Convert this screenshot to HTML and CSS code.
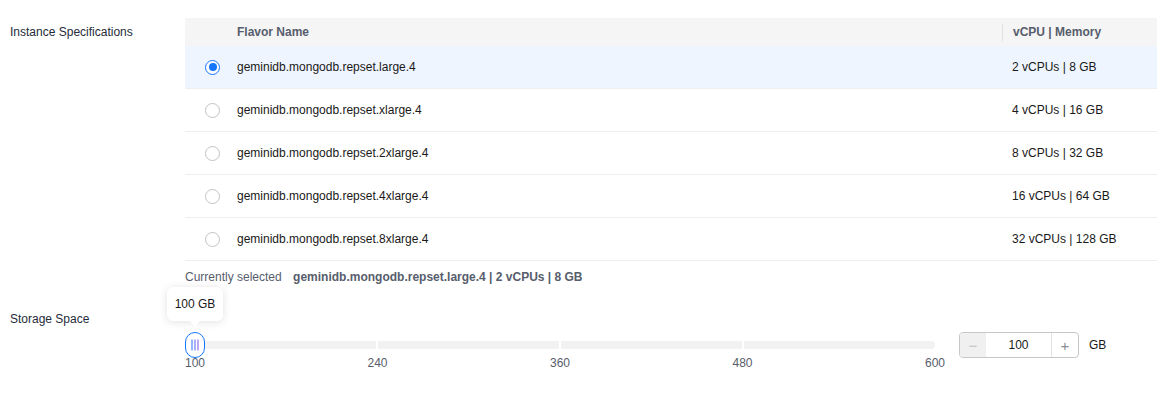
FILE: index.html
```html
<!DOCTYPE html>
<html lang="en">
  <head>
    <meta charset="UTF-8" />
    <meta name="viewport" content="width=device-width, initial-scale=1.0" />
    <title>Instance Specifications</title>
    <link rel="stylesheet" href="styles.css">
  </head>
  <body>
    <div class="form-row spec-row">
      <div class="form-label">Instance Specifications</div>
      <div class="form-content">
        <div class="flavor-table">
          <div class="flavor-head">
            <span></span>
            <span>Flavor Name</span>
            <span class="col-mem">vCPU | Memory</span>
          </div>
          <div class="flavor-row selected">
            <span class="radio checked"></span>
            <span>geminidb.mongodb.repset.large.4</span>
            <span class="col-mem">2 vCPUs | 8 GB</span>
          </div>
          <div class="flavor-row">
            <span class="radio"></span>
            <span>geminidb.mongodb.repset.xlarge.4</span>
            <span class="col-mem">4 vCPUs | 16 GB</span>
          </div>
          <div class="flavor-row">
            <span class="radio"></span>
            <span>geminidb.mongodb.repset.2xlarge.4</span>
            <span class="col-mem">8 vCPUs | 32 GB</span>
          </div>
          <div class="flavor-row">
            <span class="radio"></span>
            <span>geminidb.mongodb.repset.4xlarge.4</span>
            <span class="col-mem">16 vCPUs | 64 GB</span>
          </div>
          <div class="flavor-row">
            <span class="radio"></span>
            <span>geminidb.mongodb.repset.8xlarge.4</span>
            <span class="col-mem">32 vCPUs | 128 GB</span>
          </div>
        </div>
        <div class="current">
          <span class="current-label">Currently selected</span>
          <span class="current-value">geminidb.mongodb.repset.large.4 | 2 vCPUs | 8 GB</span>
        </div>
      </div>
    </div>

    <div class="form-row storage-row">
      <div class="form-label storage-label">Storage Space</div>
      <div class="form-content storage-control">
        <div class="slider">
          <div class="slider-rail">
            <div class="track">
              <span></span><span></span><span></span><span></span>
            </div>
            <div class="thumb">
              <svg width="10" height="12" viewBox="0 0 10 12">
                <defs>
                  <linearGradient id="grip" x1="0" y1="0" x2="1" y2="0">
                    <stop offset="0" stop-color="#3d7dff" />
                    <stop offset="1" stop-color="#8a62f0" />
                  </linearGradient>
                </defs>
                <path d="M2 0.5V11.5M5 0.5V11.5M8 0.5V11.5" stroke="url(#grip)" stroke-width="1.1" fill="none" />
              </svg>
            </div>
            <div class="tip">100 GB</div>
          </div>
          <div class="marks">
            <span>100</span><span>240</span><span>360</span><span>480</span><span class="mark-end">600</span>
          </div>
        </div>
        <div class="stepper">
          <span class="step minus">&minus;</span>
          <span class="step-value">100</span>
          <span class="step plus">+</span>
        </div>
        <span class="unit">GB</span>
      </div>
    </div>
  </body>
</html>
```

FILE: styles.css
```css
body {
  font-family: "Liberation Sans", Arial, sans-serif;
  font-size: 12px;
  margin: 0;
  color: #191919;
  background: #fff;
}
.form-row {
  display: flex;
  align-items: flex-start;
}
.form-label {
  width: 185px;
  padding-left: 10px;
  box-sizing: border-box;
  color: #252b3a;
  line-height: 14px;
  flex-shrink: 0;
}
.form-content {
  flex: 1;
}
.spec-row {
  padding-top: 18px;
}
.spec-row .form-label {
  padding-top: 7px;
}

/* flavor table */
.flavor-head,
.flavor-row {
  display: grid;
  grid-template-columns: 52px 765px 1fr;
  align-items: center;
}
.flavor-head {
  height: 28px;
  background-color: #f5f5f5;
  color: #575d6c;
  font-weight: bold;
}
.flavor-head .col-mem {
  border-left: 1px solid #dfe1e6;
  height: 17px;
  line-height: 17px;
}
.col-mem {
  padding-left: 10px;
}
.flavor-row {
  height: 42px;
  border-bottom: 1px solid #eeeeee;
}
.flavor-row.selected {
  background-color: #eff5ff;
}
.radio {
  width: 15px;
  height: 15px;
  margin-left: 20px;
  box-sizing: border-box;
  border: 1px solid #c2c2c2;
  border-radius: 50%;
  background: #fff;
}
.radio.checked {
  border: 1.5px solid #1476ff;
  display: flex;
  justify-content: center;
  align-items: center;
}
.radio.checked::after {
  content: "";
  width: 8px;
  height: 8px;
  border-radius: 50%;
  background-color: #1476ff;
}
.current {
  margin-top: 9px;
  line-height: 14px;
  color: #575d6c;
}
.current-value {
  font-weight: bold;
  margin-left: 8px;
}

/* storage slider */
.storage-label {
  padding-top: 28px;
}
.storage-control {
  display: flex;
  align-items: flex-start;
  padding-top: 48px;
}
.slider {
  width: 750px;
}
.slider-rail {
  position: relative;
  height: 26px;
  display: flex;
  align-items: center;
}
.track {
  width: 100%;
  height: 8px;
  display: grid;
  grid-template-columns: 191px 181px 181px 191px;
  gap: 2px;
}
.track span {
  background-color: #f2f2f2;
}
.track span:first-child {
  border-radius: 4px 0 0 4px;
}
.track span:last-child {
  border-radius: 0 4px 4px 0;
}
.thumb {
  position: absolute;
  left: 0;
  top: 0;
  width: 20px;
  height: 26px;
  box-sizing: border-box;
  border: 1px solid #1476ff;
  border-radius: 10px;
  background: #fff;
  display: flex;
  justify-content: center;
  align-items: center;
}
.tip {
  position: absolute;
  left: -18px;
  top: -45px;
  width: 56px;
  height: 34px;
  line-height: 34px;
  text-align: center;
  background: #fff;
  border-radius: 6px;
  box-shadow: 0 1px 8px rgba(0, 0, 0, 0.12);
  color: #191919;
}
.tip::after {
  content: "";
  position: absolute;
  left: 23px;
  bottom: -6px;
  border-left: 5px solid transparent;
  border-right: 5px solid transparent;
  border-top: 6px solid #fff;
}
.marks {
  display: flex;
  justify-content: space-between;
  margin-top: -2px;
  line-height: 14px;
  color: #575d6c;
}
.marks span {
  width: 20px;
  text-align: center;
}
.marks .mark-end {
  transform: translateX(10px);
}
.stepper {
  display: flex;
  margin-left: 24px;
  width: 120px;
  height: 26px;
  box-sizing: border-box;
  border: 1px solid #c7c7c7;
  border-radius: 4px;
  overflow: hidden;
}
.step {
  width: 26px;
  display: flex;
  justify-content: center;
  align-items: center;
  color: #8a8e99;
  font-size: 15px;
}
.minus {
  background-color: #f0f0f0;
  color: #c2c2c2;
}
.plus {
  border-left: 1px solid #e3e3e3;
}
.step-value {
  flex: 1;
  display: flex;
  justify-content: center;
  align-items: center;
}
.unit {
  margin-left: 10px;
  line-height: 26px;
}
```
